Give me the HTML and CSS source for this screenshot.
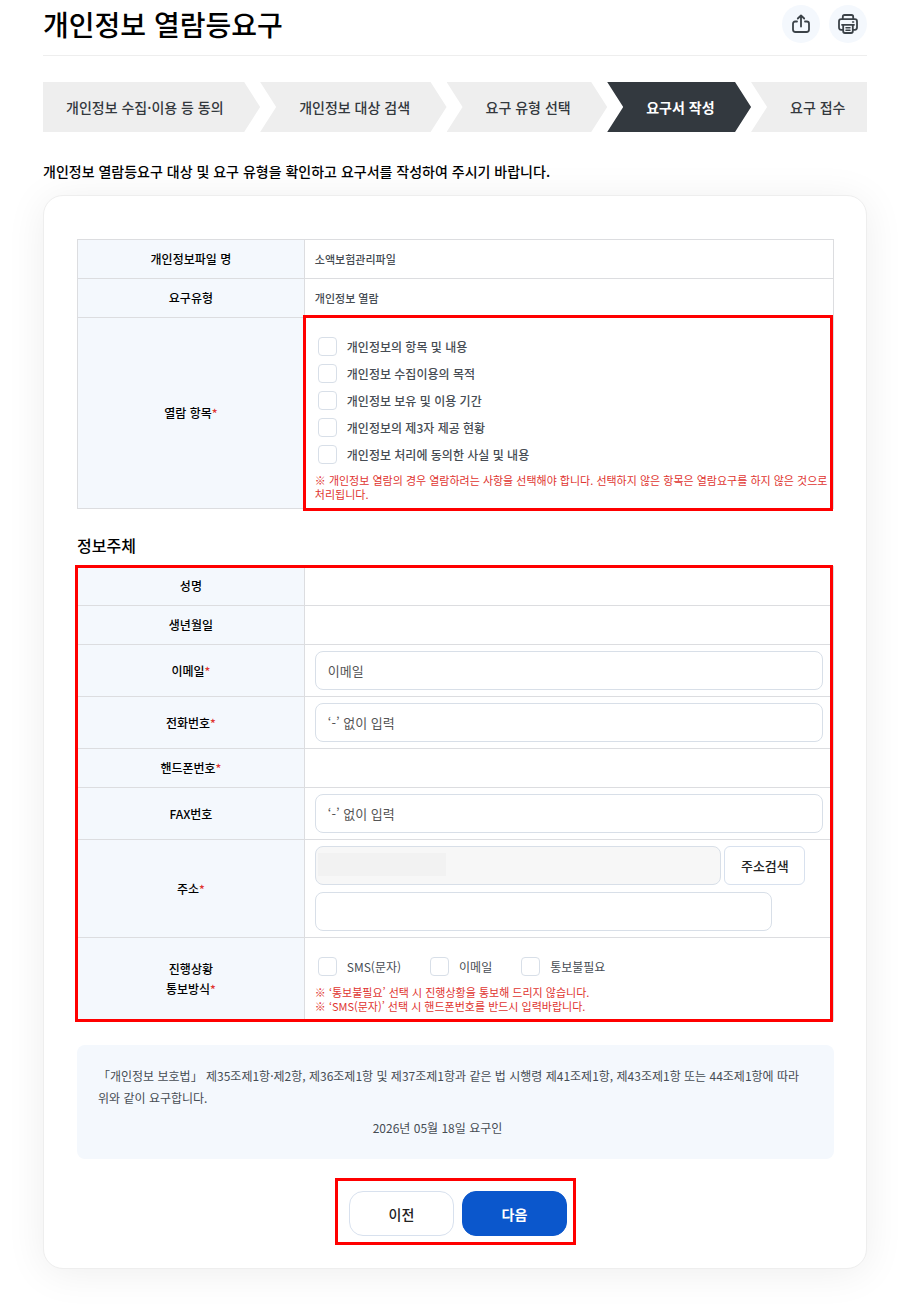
FILE: index.html
```html
<!DOCTYPE html>
<html lang="ko">
<head>
    <meta charset="UTF-8">
    <meta name="viewport" content="width=device-width, initial-scale=1.0">
    <title>개인정보 열람등요구</title>
    <link rel="stylesheet" href="styles.css">
</head>
<body>
    <div class="container">
        <header class="page-head">
            <h1>개인정보 열람등요구</h1>
            <div class="tools">
                <button type="button" class="tool" aria-label="공유">
                    <svg width="20" height="20" viewBox="0 0 20 20" fill="none" stroke="#3b4248" stroke-width="1.8" stroke-linecap="round" stroke-linejoin="round">
                        <path d="M6 7.5H4.2Q2 7.5 2 9.7V15.5Q2 18 4.5 18H15.5Q18 18 18 15.5V9.7Q18 7.5 15.8 7.5H14"/>
                        <path d="M10 12.5V1.5M6.8 4.5L10 1.4L13.2 4.5"/>
                    </svg>
                </button>
                <button type="button" class="tool" aria-label="인쇄">
                    <svg width="20" height="20" viewBox="0 0 20 20" fill="none" stroke="#3b4248" stroke-width="1.8" stroke-linecap="round" stroke-linejoin="round">
                        <path d="M4.8 5.2V2.7Q4.8 1 6.5 1H13.5Q15.2 1 15.2 2.7V5.2"/>
                        <path d="M4.8 15.8H3.2Q1 15.8 1 13.6V7.4Q1 5.2 3.2 5.2H16.8Q19 5.2 19 7.4V13.6Q19 15.8 16.8 15.8H15.2"/>
                        <path d="M4 10.8H16M5.2 10.8V17.3Q5.2 19 6.9 19H13.1Q14.8 19 14.8 17.3V10.8"/>
                        <path stroke-width="1.5" d="M8 13.7H12M8 16.2H12M14.6 8H15.6"/>
                    </svg>
                </button>
            </div>
        </header>

        <ol class="steps">
            <li>개인정보 수집·이용 등 동의</li>
            <li>개인정보 대상 검색</li>
            <li>요구 유형 선택</li>
            <li class="active" aria-current="step">요구서 작성</li>
            <li>요구 접수</li>
        </ol>

        <p class="intro">개인정보 열람등요구 대상 및 요구 유형을 확인하고 요구서를 작성하여 주시기 바랍니다.</p>

        <form class="card">
            <!-- 요구 대상 -->
            <table class="form-table">
                <tr>
                    <th scope="row">개인정보파일 명</th>
                    <td class="value">소액보험관리파일</td>
                </tr>
                <tr>
                    <th scope="row">요구유형</th>
                    <td class="value">개인정보 열람</td>
                </tr>
                <tr>
                    <th scope="row">열람 항목<span class="req">*</span></th>
                    <td class="checks marked marked-cell">
                        <div class="check-list">
                            <label class="check"><input type="checkbox" name="item">개인정보의 항목 및 내용</label>
                            <label class="check"><input type="checkbox" name="item">개인정보 수집이용의 목적</label>
                            <label class="check"><input type="checkbox" name="item">개인정보 보유 및 이용 기간</label>
                            <label class="check"><input type="checkbox" name="item">개인정보의 제3자 제공 현황</label>
                            <label class="check"><input type="checkbox" name="item">개인정보 처리에 동의한 사실 및 내용</label>
                        </div>
                        <p class="note">※ 개인정보 열람의 경우 열람하려는 사항을 선택해야 합니다. 선택하지 않은 항목은 열람요구를 하지 않은 것으로 처리됩니다.</p>
                    </td>
                </tr>
            </table>

            <!-- 정보주체 -->
            <h2>정보주체</h2>
            <div class="marked">
                <table class="form-table">
                    <tr>
                        <th scope="row">성명</th>
                        <td></td>
                    </tr>
                    <tr>
                        <th scope="row">생년월일</th>
                        <td></td>
                    </tr>
                    <tr>
                        <th scope="row"><label for="email">이메일<span class="req">*</span></label></th>
                        <td class="field"><input type="text" class="text" id="email" placeholder="이메일"></td>
                    </tr>
                    <tr>
                        <th scope="row"><label for="tel">전화번호<span class="req">*</span></label></th>
                        <td class="field"><input type="text" class="text" id="tel" placeholder="‘-’ 없이 입력"></td>
                    </tr>
                    <tr>
                        <th scope="row">핸드폰번호<span class="req">*</span></th>
                        <td></td>
                    </tr>
                    <tr>
                        <th scope="row"><label for="fax">FAX번호</label></th>
                        <td class="field"><input type="text" class="text" id="fax" placeholder="‘-’ 없이 입력"></td>
                    </tr>
                    <tr>
                        <th scope="row"><label for="addr">주소<span class="req">*</span></label></th>
                        <td class="field">
                            <div class="addr-row">
                                <input type="text" class="text addr" id="addr" readonly>
                                <button type="button" class="btn-search">주소검색</button>
                            </div>
                            <input type="text" class="text addr-detail" aria-label="상세주소">
                        </td>
                    </tr>
                    <tr>
                        <th scope="row">진행상황<br>통보방식<span class="req">*</span></th>
                        <td class="checks">
                            <div class="check-row">
                                <label class="check"><input type="checkbox" name="notify">SMS(문자)</label>
                                <label class="check"><input type="checkbox" name="notify">이메일</label>
                                <label class="check"><input type="checkbox" name="notify">통보불필요</label>
                            </div>
                            <p class="note">※ ‘통보불필요’ 선택 시 진행상황을 통보해 드리지 않습니다.<br>※ ‘SMS(문자)’ 선택 시 핸드폰번호를 반드시 입력바랍니다.</p>
                        </td>
                    </tr>
                </table>
            </div>

            <div class="law">
                <p>「개인정보 보호법」 제35조제1항·제2항, 제36조제1항 및 제37조제1항과 같은 법 시행령 제41조제1항, 제43조제1항 또는 44조제1항에 따라<br>위와 같이 요구합니다.</p>
                <p class="date">2026년 05월 18일 요구인</p>
            </div>

            <div class="buttons">
                <button type="button" class="btn">이전</button>
                <button type="submit" class="btn btn-primary">다음</button>
            </div>
        </form>
    </div>
</body>
</html>
```
FILE: styles.css
```css
* {
    box-sizing: border-box;
}

body {
    margin: 0;
    background: #fff;
    color: #464c53;
    font-family: "Noto Sans CJK KR", "Noto Sans", sans-serif;
    font-size: 12px;
    line-height: 20px;
    word-break: keep-all;
}

h1, h2, p, ol {
    margin: 0;
    padding: 0;
}

button, input {
    font-family: inherit;
}

button {
    padding: 0;
    cursor: pointer;
}

.container {
    padding: 0 38px 38px 43px;
}

/* 제목 */
.page-head {
    display: flex;
    justify-content: space-between;
    align-items: center;
    padding: 5px 0 12px;
    border-bottom: 1px solid #eee;
}

h1 {
    color: #000;
    font-size: 28px;
    font-weight: 500;
    line-height: 38px;
}

.tools {
    display: flex;
    gap: 9px;
}

.tool {
    display: flex;
    align-items: center;
    justify-content: center;
    width: 38px;
    height: 38px;
    border: 0;
    border-radius: 50%;
    background: #f4f8fd;
}

/* 단계 */
.steps {
    display: flex;
    margin-top: 26px;
    list-style: none;
}

.steps li {
    flex: 1 0 auto;
    padding: 0 35px 0 39px;
    background: #eee;
    clip-path: polygon(0 0, calc(100% - 16px) 0, 100% 50%, calc(100% - 16px) 100%, 0 100%, 16px 50%);
    color: #33383d;
    font-size: 14px;
    font-weight: 500;
    line-height: 50px;
}

.steps li:first-child {
    padding-left: 23px;
    clip-path: polygon(0 0, calc(100% - 16px) 0, 100% 50%, calc(100% - 16px) 100%, 0 100%);
}

.steps li:last-child {
    padding-right: 20px;
    clip-path: polygon(0 0, 100% 0, 100% 100%, 0 100%, 16px 50%);
}

.steps li.active {
    background: #33393f;
    color: #fff;
    font-weight: 700;
}

.intro {
    margin: 29px 0 14px;
    color: #000;
    font-size: 14px;
    font-weight: 500;
}

/* 요구서 */
.card {
    padding: 43px 32px 23px 33px;
    border: 1px solid #eee;
    border-radius: 20px;
    background: #fff;
    box-shadow: 0 4px 40px rgba(0, 0, 0, 0.07);
}

.form-table {
    width: 100%;
    table-layout: fixed;
    border-collapse: collapse;
}

.form-table th,
.form-table td {
    padding: 9px 10px;
    border: 1px solid #dcdde0;
}

.form-table th {
    width: 30%;
    background: #f4f8fd;
    color: #000;
    font-weight: 500;
    text-align: center;
}

.form-table .value {
    font-size: 11px;
    font-weight: 500;
}

.form-table .field {
    padding: 6px 10px;
}

.form-table .checks {
    padding: 19px 3px 7px 10px;
}

.req {
    color: #e0342f;
}

/* 빨간 강조 테두리 */
.marked {
    position: relative;
}

.marked::after {
    content: "";
    position: absolute;
    inset: -1px 1px -1px -2px;
    border: 3px solid #f00;
    pointer-events: none;
}

.marked-cell::after {
    inset: -3px 0 -3px -2px;
}

h2 {
    margin: 24px 0 9px;
    color: #000;
    font-size: 16px;
    font-weight: 500;
    line-height: 24px;
}

.check-list {
    display: flex;
    flex-direction: column;
    align-items: flex-start;
    gap: 8px;
    font-weight: 500;
}

.check-row {
    display: flex;
    gap: 26px;
}

.check {
    display: flex;
    align-items: center;
    gap: 10px;
    height: 19px;
}

.check input {
    appearance: none;
    width: 19px;
    height: 19px;
    margin: 0 0 0 3px;
    border: 1px solid #d8dfe8;
    border-radius: 4px;
    background: #fff;
}

.check input:checked {
    background: #0b57cc;
}

.note {
    margin-top: 9px;
    color: #e0342f;
    font-size: 11px;
    line-height: 14px;
}

.text {
    display: block;
    width: 100%;
    height: 39px;
    padding: 0 12px;
    border: 1px solid #d8dfe8;
    border-radius: 8px;
    background: #fff;
    color: #464c53;
    font-size: 13px;
}

.text::placeholder {
    color: #555;
    opacity: 1;
}

.addr-row {
    display: flex;
    gap: 3px;
    margin-bottom: 7px;
}

.addr {
    width: 80%;
    background: #f7f7f7 linear-gradient(#f2f2f2, #f2f2f2) 2px 6px / 128px 23px no-repeat;
}

.addr-detail {
    width: 90%;
}

.btn-search {
    width: 81px;
    border: 1px solid #d8e1ee;
    border-radius: 6px;
    background: #fff;
    color: #222;
    font-size: 13px;
    font-weight: 500;
}

.law {
    margin-top: 24px;
    padding: 20px 21px;
    border-radius: 8px;
    background: #f4f8fd;
    line-height: 22px;
}

.law .date {
    margin-top: 8px;
    padding-right: 36px;
    text-align: center;
}

/* 버튼 */
.buttons {
    display: flex;
    gap: 8px;
    width: fit-content;
    margin: 19px auto 0;
    padding: 10px 6px 6px 11px;
    border: 3px solid #f00;
}

.btn {
    width: 105px;
    height: 45px;
    border: 1px solid #d8e1ee;
    border-radius: 14px;
    background: #fff;
    color: #222;
    font-size: 14px;
    font-weight: 500;
}

.btn-primary {
    border-color: #0b57cc;
    background: #0b57cc;
    color: #fff;
    font-weight: 700;
}
```
